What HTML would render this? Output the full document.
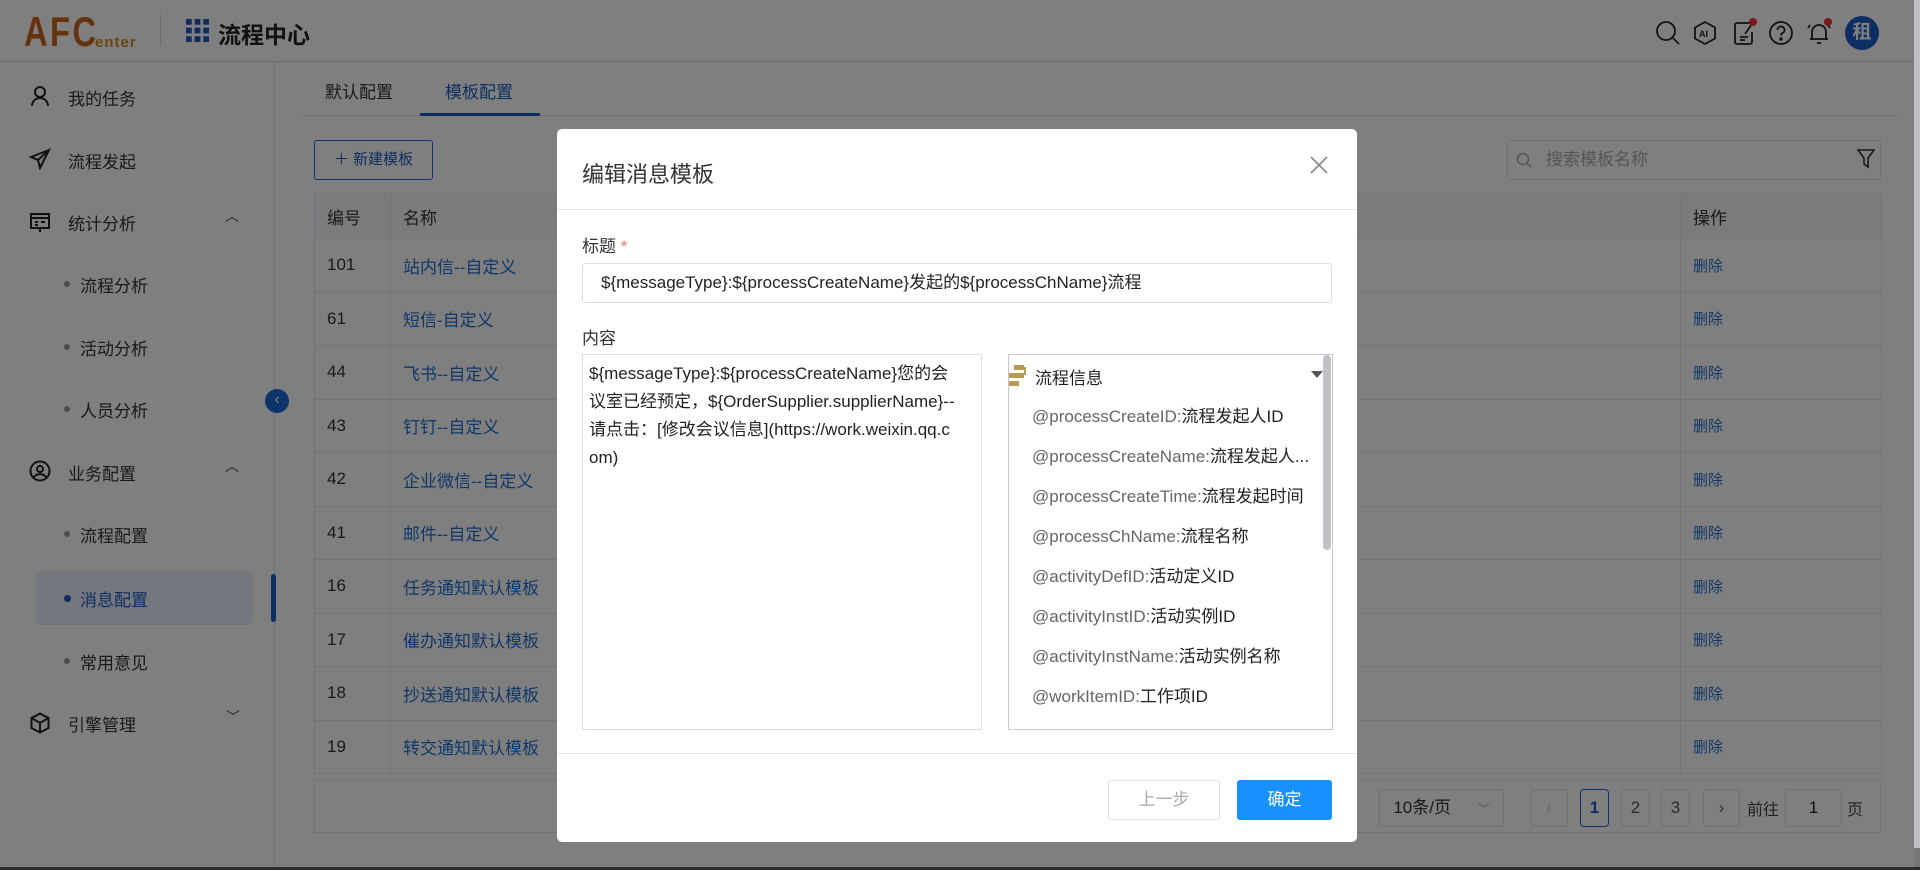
<!DOCTYPE html>
<html><head><meta charset="utf-8">
<style>
*{box-sizing:border-box;margin:0;padding:0}
body{width:1920px;height:870px;overflow:hidden;position:relative;background:#fff;font-family:"Liberation Sans","Noto Sans CJK SC",sans-serif;color:#333}
.a{position:absolute}
.hdr{left:0;top:0;width:1914px;height:62px;border-bottom:1px solid #ddd;background:#fff}
.side{left:0;top:62px;width:275px;height:806px;border-right:1px solid #e4e4e4;background:#fff}
.si{position:absolute;left:68px;font-size:17px;color:#333}
.sub{position:absolute;left:80px;font-size:17px;color:#333}
.sub:before{content:"";position:absolute;left:-16px;top:9px;width:6px;height:6px;border-radius:50%;background:#999}
.ic{position:absolute;left:29px}
table{border-collapse:collapse;position:absolute;left:314px;top:193px;width:1567px;font-size:17px;table-layout:fixed}
td,th{border:1px solid #e6e8ee;height:53.5px;padding-left:12px;text-align:left;font-weight:normal}
th{background:#f5f7fa;color:#333;height:45px}
td.l{color:#1f6fd1}
td.d{color:#1f6fd1;font-size:15px}
.ov{left:0;top:0;width:1920px;height:870px;background:rgba(0,0,0,.5)}
.dlg{left:557px;top:129px;width:800px;height:713px;background:#fff;border-radius:5px}
.pg{position:absolute;top:789px;height:38px;border:1px solid #dcdfe6;border-radius:4px;text-align:center;line-height:36px;font-size:17px;color:#555}
</style></head><body>
<div class="a hdr">
 <div class="a" style="left:24px;top:8px;font-size:42px;font-weight:bold;color:#c8661a;letter-spacing:3px;transform:scaleX(.78);transform-origin:left">AFC</div>
 <div class="a" style="left:95px;top:34px;font-size:15px;font-weight:bold;color:#d58a18;letter-spacing:1px">enter</div>
 <div class="a" style="left:160px;top:14px;width:1px;height:32px;background:#ddd"></div>
 <svg class="a" style="left:186px;top:19px" width="23" height="23" viewBox="0 0 24 24" fill="#1b56b8"><rect x="0" y="0" width="6" height="6"/><rect x="9" y="0" width="6" height="6"/><rect x="18" y="0" width="6" height="6"/><rect x="0" y="9" width="6" height="6"/><rect x="9" y="9" width="6" height="6"/><rect x="18" y="9" width="6" height="6"/><rect x="0" y="18" width="6" height="6"/><rect x="9" y="18" width="6" height="6"/><rect x="18" y="18" width="6" height="6"/></svg>
 <div class="a" style="left:218px;top:16px;font-size:23px;font-weight:bold;color:#222">流程中心</div>
 <svg class="a" style="left:1655px;top:20px" width="26" height="26" viewBox="0 0 26 26" fill="none" stroke="#222" stroke-width="1.8"><circle cx="11" cy="11" r="9"/><path d="M18 18l6 6"/></svg>
 <svg class="a" style="left:1692px;top:20px" width="26" height="26" viewBox="0 0 26 26" fill="none" stroke="#222" stroke-width="1.8"><path d="M13 2l10 5.5v11L13 24 3 18.5v-11z"/><text x="7" y="17" font-size="9" font-weight="bold" fill="#222" stroke="none" font-family="Liberation Sans">AI</text></svg>
 <svg class="a" style="left:1732px;top:20px" width="26" height="26" viewBox="0 0 26 26" fill="none" stroke="#222" stroke-width="1.8"><path d="M18 3H5a2 2 0 0 0-2 2v17a2 2 0 0 0 2 2h13a2 2 0 0 0 2-2V12"/><path d="M8 17h8M8 20h5M13 14l7-10"/></svg>
 <div class="a" style="left:1749px;top:18px;width:8px;height:8px;border-radius:50%;background:#e33"></div>
 <svg class="a" style="left:1768px;top:20px" width="26" height="26" viewBox="0 0 26 26" fill="none" stroke="#222" stroke-width="1.8"><circle cx="13" cy="13" r="11"/><path d="M9.5 10a3.5 3.5 0 1 1 4.5 3.3c-1 .4-1 1.2-1 2.2"/><circle cx="13" cy="19" r=".8" fill="#222"/></svg>
 <svg class="a" style="left:1806px;top:20px" width="26" height="26" viewBox="0 0 26 26" fill="none" stroke="#222" stroke-width="1.8"><path d="M6 19V12a7 7 0 0 1 14 0v7H4h18M11 23h4M2 8l2-3M24 8l-2-3"/></svg>
 <div class="a" style="left:1824px;top:18px;width:8px;height:8px;border-radius:50%;background:#e33"></div>
 <div class="a" style="left:1845px;top:16px;width:34px;height:34px;border-radius:50%;background:#1b5cc4;color:#fff;font-weight:bold;font-size:19px;text-align:center;line-height:34px">租</div>
</div>
<div class="a side">
 <svg class="ic" style="top:23px" width="22" height="22" viewBox="0 0 22 22" fill="none" stroke="#222" stroke-width="2"><circle cx="11" cy="7" r="5"/><path d="M3 21a8 8 0 0 1 16 0"/></svg>
 <div class="si" style="top:23px">我的任务</div>
 <svg class="ic" style="top:86px" width="22" height="22" viewBox="0 0 22 22" fill="none" stroke="#222" stroke-width="2"><path d="M20 2L2 9l7 3 2 8z M9 12l11-10"/></svg>
 <div class="si" style="top:86px">流程发起</div>
 <svg class="ic" style="top:149px" width="22" height="22" viewBox="0 0 22 22" fill="none" stroke="#222" stroke-width="2"><rect x="2" y="3" width="18" height="14"/><path d="M2 7h18M6 11h3M12 11h4M6 14h3M11 21l0-4"/></svg>
 <div class="si" style="top:148px">统计分析</div>
 <div class="a" style="left:225px;top:144px;font-size:14px;color:#444">︿</div>
 <div class="sub" style="top:210px">流程分析</div>
 <div class="sub" style="top:273px">活动分析</div>
 <div class="sub" style="top:335px">人员分析</div>
 <svg class="ic" style="top:398px" width="22" height="22" viewBox="0 0 22 22" fill="none" stroke="#222" stroke-width="2"><circle cx="11" cy="11" r="9.5"/><circle cx="11" cy="9" r="3"/><path d="M5 17a7 6 0 0 1 12 0"/></svg>
 <div class="si" style="top:398px">业务配置</div>
 <div class="a" style="left:225px;top:394px;font-size:14px;color:#444">︿</div>
 <div class="sub" style="top:460px">流程配置</div>
 <div class="a" style="left:36px;top:509px;width:217px;height:54px;border-radius:6px;background:#e8eefa"></div>
 <div class="a" style="left:271px;top:512px;width:5px;height:48px;border-radius:3px;background:#1b5cc4"></div>
 <div class="sub" style="top:524px;color:#1b5cc4">消息配置</div>
 <div class="a" style="left:64px;top:533px;width:7px;height:7px;border-radius:50%;background:#1b5cc4"></div>
 <div class="sub" style="top:587px">常用意见</div>
 <svg class="ic" style="top:650px" width="22" height="22" viewBox="0 0 22 22" fill="none" stroke="#222" stroke-width="2"><path d="M11 1.5l8.5 4.5v10L11 20.5 2.5 16V6z M2.5 6L11 11l8.5-5M11 11v9.5"/></svg>
 <div class="si" style="top:649px">引擎管理</div>
 <div class="a" style="left:226px;top:645px;font-size:14px;color:#444">﹀</div>
</div>
<div class="a" style="left:265px;top:389px;width:24px;height:24px;border-radius:50%;background:#1b6ad8;color:#fff;font-size:16px;text-align:center;line-height:22px">‹</div>
<div class="a" style="left:325px;top:78px;font-size:17px;color:#333">默认配置</div>
<div class="a" style="left:445px;top:78px;font-size:17px;color:#1b5cc4">模板配置</div>
<div class="a" style="left:300px;top:115px;width:1600px;height:1px;background:#e4e4e4"></div>
<div class="a" style="left:420px;top:113px;width:120px;height:3px;background:#1b5cc4"></div>
<div class="a" style="left:314px;top:140px;width:119px;height:40px;border:1px solid #1b6ad8;border-radius:3px;color:#1b5cc4;font-size:15px;line-height:38px;text-align:center">＋ 新建模板</div>
<div class="a" style="left:1507px;top:140px;width:374px;height:40px;border:1px solid #dcdfe6;border-radius:3px;color:#aaa;font-size:17px;line-height:38px;padding-left:38px">搜索模板名称</div>
<svg class="a" style="left:1516px;top:152px" width="16" height="16" viewBox="0 0 16 16" fill="none" stroke="#aaa" stroke-width="1.5"><circle cx="7" cy="7" r="5.5"/><path d="M11 11l4 4"/></svg>
<svg class="a" style="left:1857px;top:149px" width="18" height="20" viewBox="0 0 18 20" fill="none" stroke="#333" stroke-width="1.6"><path d="M1 1h16l-6 8v9l-4-3V9z"/></svg>
<table>
<colgroup><col style="width:76px"><col style="width:1290px"><col style="width:201px"></colgroup>
<tr><th>编号</th><th>名称</th><th>操作</th></tr>
<tr><td>101</td><td class="l">站内信--自定义</td><td class="d">删除</td></tr>
<tr><td>61</td><td class="l">短信-自定义</td><td class="d">删除</td></tr>
<tr><td>44</td><td class="l">飞书--自定义</td><td class="d">删除</td></tr>
<tr><td>43</td><td class="l">钉钉--自定义</td><td class="d">删除</td></tr>
<tr><td>42</td><td class="l">企业微信--自定义</td><td class="d">删除</td></tr>
<tr><td>41</td><td class="l">邮件--自定义</td><td class="d">删除</td></tr>
<tr><td>16</td><td class="l">任务通知默认模板</td><td class="d">删除</td></tr>
<tr><td>17</td><td class="l">催办通知默认模板</td><td class="d">删除</td></tr>
<tr><td>18</td><td class="l">抄送通知默认模板</td><td class="d">删除</td></tr>
<tr><td>19</td><td class="l">转交通知默认模板</td><td class="d">删除</td></tr>
</table>
<div class="a" style="left:314px;top:780px;width:1567px;height:53px;border:1px solid #e6e8ee"></div>
<div class="pg" style="left:1379px;width:125px;color:#333">10条/页 <span style="color:#aaa;font-size:12px;margin-left:22px">﹀</span></div>
<div class="pg" style="left:1530px;width:38px;color:#ccc">‹</div>
<div class="pg" style="left:1580px;width:29px;border-color:#1b6ad8;color:#1b5cc4;font-weight:bold">1</div>
<div class="pg" style="left:1621px;width:29px">2</div>
<div class="pg" style="left:1661px;width:29px">3</div>
<div class="pg" style="left:1703px;width:37px">›</div>
<div class="a" style="left:1747px;top:796px;font-size:16px;color:#444">前往</div>
<div class="pg" style="left:1785px;width:57px;color:#222">1</div>
<div class="a" style="left:1847px;top:796px;font-size:16px;color:#444">页</div>
<div class="a" style="left:1914px;top:0;width:6px;height:870px;background:#eee"></div>
<div class="a ov"></div>
<div class="a" style="left:1914px;top:0;width:6px;height:848px;background:#c0c1c6"></div>
<div class="a" style="left:0;top:867px;width:1920px;height:3px;background:#2c2c2c"></div>
<div class="a dlg">
 <div class="a" style="left:25px;top:28px;font-size:22px;color:#333">编辑消息模板</div>
 <svg class="a" style="left:753px;top:27px" width="18" height="18" viewBox="0 0 18 18" stroke="#888" stroke-width="1.6"><path d="M1 1l16 16M17 1L1 17"/></svg>
 <div class="a" style="left:0;top:80px;width:800px;height:1px;background:#e8e8e8"></div>
 <div class="a" style="left:25px;top:103px;font-size:17px;color:#333">标题 <span style="color:#f56c6c">*</span></div>
 <div class="a" style="left:25px;top:134px;width:750px;height:40px;border:1px solid #dcdfe6;border-radius:3px;font-size:17px;line-height:38px;padding-left:18px;color:#222">${messageType}:${processCreateName}发起的${processChName}流程</div>
 <div class="a" style="left:25px;top:195px;font-size:17px;color:#333">内容</div>
 <div class="a" style="left:25px;top:225px;width:400px;height:376px;border:1px solid #dcdfe6;font-size:17px;line-height:28px;padding:5px 22px 5px 6px;color:#222;word-break:break-all">${messageType}:${processCreateName}您的会议室已经预定，${OrderSupplier.supplierName}--请点击：[修改会议信息](https://work.weixin.qq.com)</div>
 <div class="a" style="left:451px;top:225px;width:325px;height:376px;border:1px solid #c8c9cc;overflow:hidden">
  <svg class="a" style="left:0;top:10px" width="18" height="22" viewBox="0 0 18 22" fill="#b89a55"><rect x="5" y="0" width="10" height="5"/><rect x="0" y="8" width="15" height="5"/><rect x="0" y="16" width="10" height="5"/><rect x="15" y="2" width="2" height="8"/></svg>
  <div class="a" style="left:26px;top:9px;font-size:17px;color:#222">流程信息</div>
  <div class="a" style="left:302px;top:16px;width:0;height:0;border-left:6px solid transparent;border-right:6px solid transparent;border-top:7px solid #555"></div>
  <div class="a" style="left:314px;top:0;width:8px;height:195px;border-radius:4px;background:#c0c1c6"></div>
  <div class="a" style="left:23px;top:42px;font-size:17px;line-height:40px;color:#222;white-space:nowrap">
   <div><span style="color:#666">@processCreateID:</span>流程发起人ID</div>
   <div><span style="color:#666">@processCreateName:</span>流程发起人...</div>
   <div><span style="color:#666">@processCreateTime:</span>流程发起时间</div>
   <div><span style="color:#666">@processChName:</span>流程名称</div>
   <div><span style="color:#666">@activityDefID:</span>活动定义ID</div>
   <div><span style="color:#666">@activityInstID:</span>活动实例ID</div>
   <div><span style="color:#666">@activityInstName:</span>活动实例名称</div>
   <div><span style="color:#666">@workItemID:</span>工作项ID</div>
  </div>
 </div>
 <div class="a" style="left:0;top:624px;width:800px;height:1px;background:#e8e8e8"></div>
 <div class="a" style="left:551px;top:651px;width:112px;height:40px;border:1px solid #dcdfe6;border-radius:3px;text-align:center;line-height:38px;font-size:17px;color:#aaa">上一步</div>
 <div class="a" style="left:680px;top:651px;width:95px;height:40px;border-radius:3px;background:#1890ff;text-align:center;line-height:40px;font-size:17px;color:#fff">确定</div>
</div>
</body></html>
